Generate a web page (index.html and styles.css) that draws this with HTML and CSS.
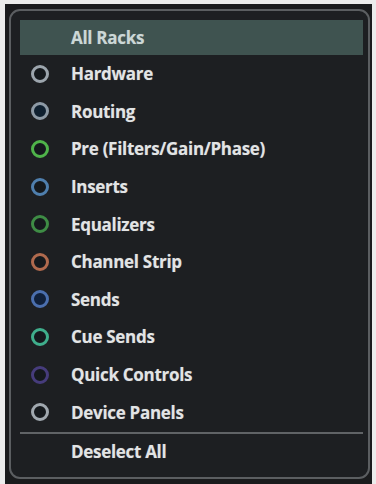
FILE: index.html
```html
<!DOCTYPE html>
<html>
<head>
<meta charset="utf-8">
<link rel="stylesheet" href="styles.css">
</head>
<body>
<div class="frame">
  <div class="panel">
    <div class="item selected"><span class="label">All Racks</span></div>
    <div class="item"><span class="dot c-hw"></span><span class="label">Hardware</span></div>
    <div class="item"><span class="dot c-rt"></span><span class="label">Routing</span></div>
    <div class="item"><span class="dot c-pre"></span><span class="label">Pre (Filters/Gain/Phase)</span></div>
    <div class="item"><span class="dot c-ins"></span><span class="label">Inserts</span></div>
    <div class="item"><span class="dot c-eq"></span><span class="label">Equalizers</span></div>
    <div class="item"><span class="dot c-cs"></span><span class="label">Channel Strip</span></div>
    <div class="item"><span class="dot c-snd"></span><span class="label">Sends</span></div>
    <div class="item"><span class="dot c-cue"></span><span class="label">Cue Sends</span></div>
    <div class="item"><span class="dot c-qc"></span><span class="label">Quick Controls</span></div>
    <div class="item"><span class="dot c-dp"></span><span class="label">Device Panels</span></div>
    <div class="sep"></div>
    <div class="item last"><span class="label">Deselect All</span></div>
  </div>
</div>
</body>
</html>
```
FILE: styles.css
```css
html, body {
  margin: 0;
  padding: 0;
  background: #ececec;
  width: 376px;
  height: 484px;
  overflow: hidden;
}
.frame {
  margin: 4px 0 0 5px;
  width: 367px;
  height: 480px;
  box-sizing: border-box;
  padding: 5px 2px 5px 4px;
  background: #1a1b1d;
}
.panel {
  box-sizing: border-box;
  height: 470px;
  border: 2px solid #5b5e61;
  border-radius: 11px;
  background: #1d1f22;
  padding: 9px 5px 0 9px;
  font-family: "Open Sans", "Liberation Sans", sans-serif;
  font-weight: 700;
  font-size: 17px;
  color: #e2e4e5;
}
.item {
  display: flex;
  align-items: center;
  height: 37.6px;
}
.item.selected {
  height: 35px;
  background: #3f5350;
  color: #cbd7d6;
}
.item.last {
  height: 35px;
}
.label {
  margin-left: 51px;
  letter-spacing: -0.3px;
  text-shadow: 0 0 1px rgba(220, 220, 220, 0.35);
}
.dot + .label {
  margin-left: 22px;
}
.dot {
  box-sizing: border-box;
  width: 18px;
  height: 18px;
  margin-left: 11px;
  border-radius: 50%;
  border: 3.5px solid #9aa3ab;
  background: #15191d;
  filter: blur(0.5px);
}
.sep {
  height: 2px;
  background: #606366;
  margin: 1px 0 0 0;
}
.c-hw { border-color: #9ca5ad; }
.c-rt { border-color: #8d9aa6; background: #0f2030; }
.c-pre { border-color: #4fb34a; }
.c-ins { border-color: #4f7fae; }
.c-eq { border-color: #3e8c45; }
.c-cs { border-color: #b06a4e; }
.c-snd { border-color: #4b6fae; background: #10203a; }
.c-cue { border-color: #3fae8c; }
.c-qc { border-color: #463c7c; }
.c-dp { border-color: #a0a8af; }
```
